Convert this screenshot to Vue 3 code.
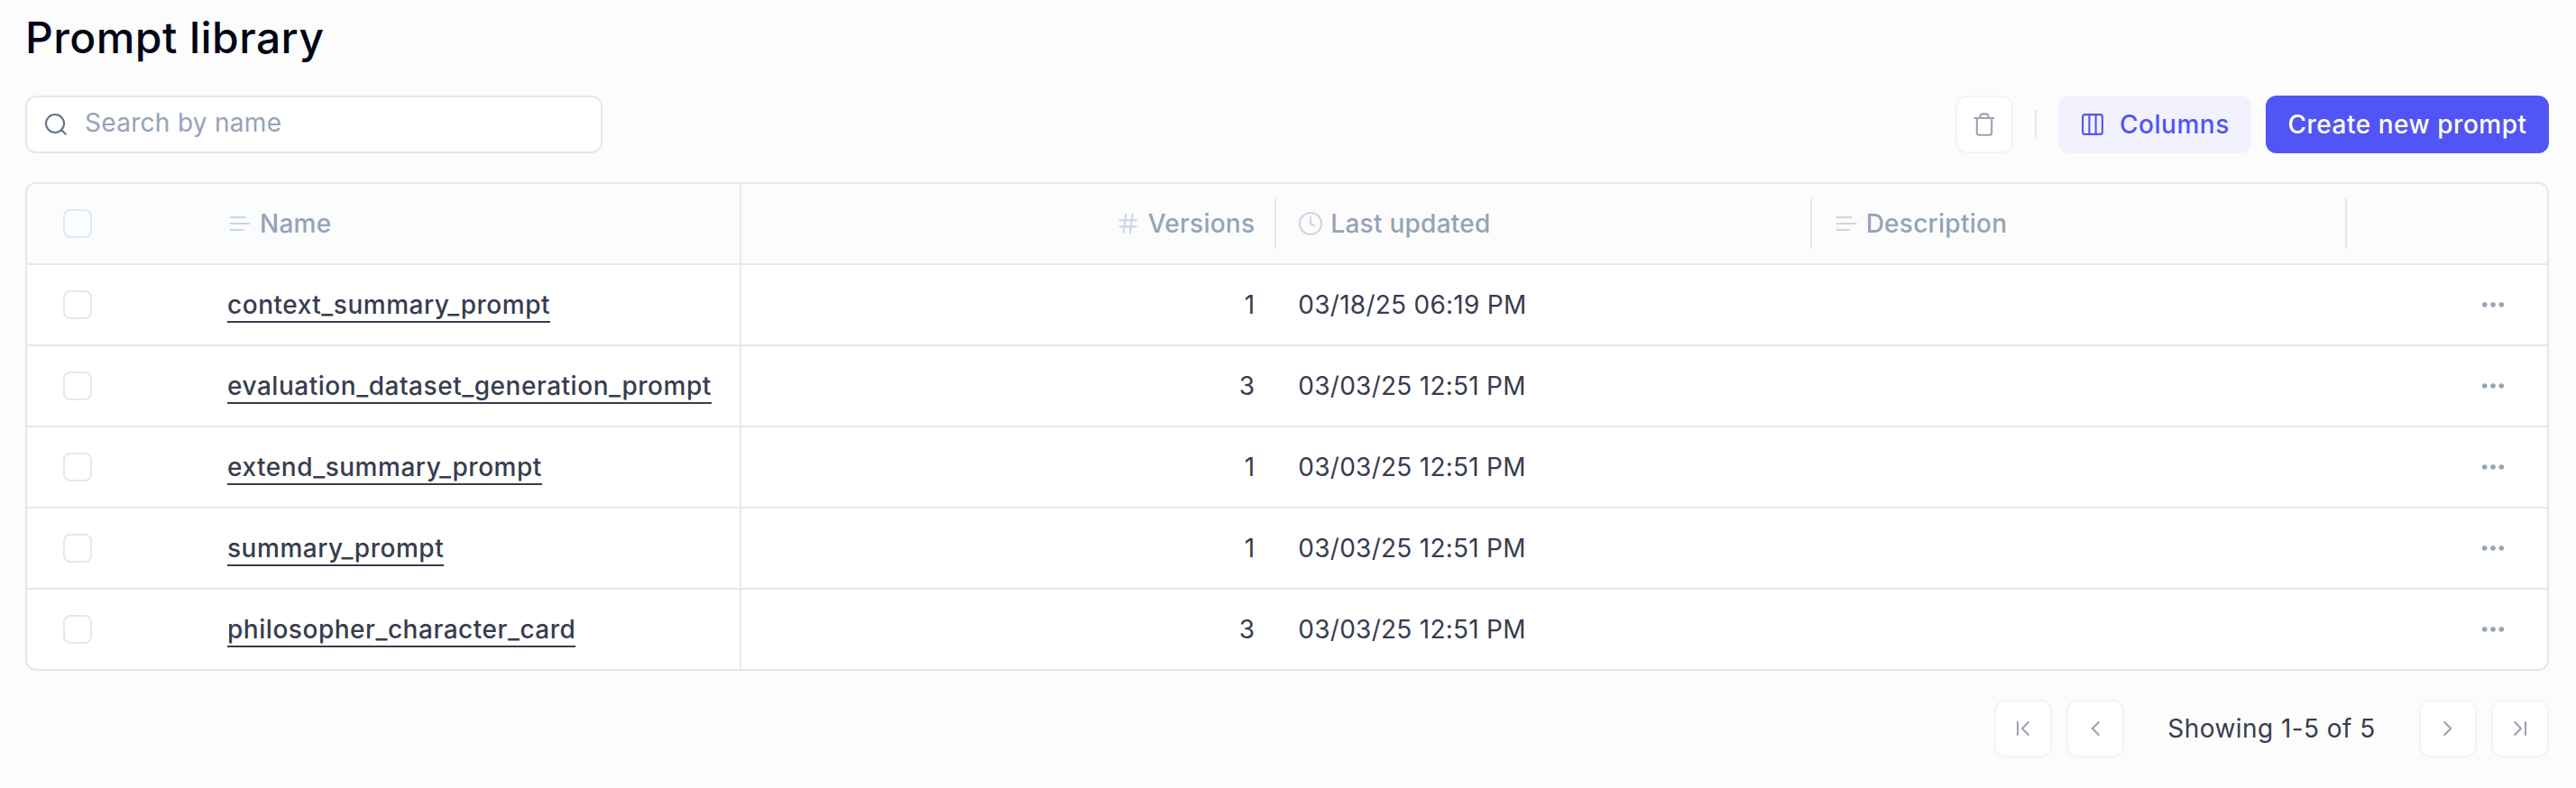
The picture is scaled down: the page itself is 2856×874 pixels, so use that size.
<template>
  <main class="page">
    <h1 class="title">Prompt library</h1>

    <div class="toolbar">
      <label class="search">
        <svg class="icon" viewBox="0 0 28 28">
          <circle cx="13" cy="13" r="10" />
          <path d="M20.2 20.2 24.8 24.8" />
        </svg>
        <input v-model="search" type="text" placeholder="Search by name" />
      </label>

      <div class="actions">
        <button class="btn-icon" aria-label="Delete">
          <svg class="icon" viewBox="0 0 28 28">
            <path d="M3.5 7h21M22.2 7v16.2a2.5 2.5 0 0 1-2.5 2.5H8.3a2.5 2.5 0 0 1-2.5-2.5V7M9.5 7V5a2.5 2.5 0 0 1 2.5-2.6h4A2.5 2.5 0 0 1 18.5 5v2" />
          </svg>
        </button>
        <span class="divider"></span>
        <button class="btn btn-secondary">
          <svg class="icon-columns" viewBox="0 0 24 24">
            <rect x="1.1" y="1.1" width="21.8" height="21.8" rx="2.5" />
            <path d="M8.4 1v22M15.6 1v22" />
          </svg>
          Columns
        </button>
        <button class="btn btn-primary">Create new prompt</button>
      </div>
    </div>

    <div class="table">
      <div class="row head">
        <div class="cell pinned">
          <span class="checkbox"></span>
          <span class="label">
            <svg class="icon" viewBox="0 0 28 28"><path d="M3.7 7h15.6M3.7 14h21M3.7 21h13.6" /></svg>
            Name
          </span>
        </div>
        <div class="cell right sep">
          <span class="label">
            <svg class="icon" viewBox="0 0 28 28"><path d="M4.7 10.4h18M4.7 17.4h18M11.3 3.7 8.6 24.3M18.6 3.7 15.9 24.3" /></svg>
            Versions
          </span>
        </div>
        <div class="cell sep">
          <span class="label">
            <svg class="icon" viewBox="0 0 28 28"><circle cx="14" cy="14" r="12" /><path d="M14 7v7l4.2 2.3" /></svg>
            Last updated
          </span>
        </div>
        <div class="cell sep">
          <span class="label">
            <svg class="icon" viewBox="0 0 28 28"><path d="M3.7 7h15.6M3.7 14h21M3.7 21h13.6" /></svg>
            Description
          </span>
        </div>
        <div class="cell"></div>
      </div>

      <div v-for="prompt in filtered" :key="prompt.name" class="row">
        <div class="cell pinned">
          <span class="checkbox"></span>
          <a class="name">{{ prompt.name }}</a>
        </div>
        <div class="cell right">{{ prompt.versions }}</div>
        <div class="cell">{{ prompt.updated }}</div>
        <div class="cell"></div>
        <div class="cell menu">
          <svg class="icon dots" viewBox="0 0 28 28">
            <circle cx="4.7" cy="14" r="2.8" />
            <circle cx="14" cy="14" r="2.8" />
            <circle cx="23.3" cy="14" r="2.8" />
          </svg>
        </div>
      </div>
    </div>

    <div class="pagination">
      <button class="btn-icon" aria-label="First page">
        <svg class="icon" viewBox="0 0 28 28"><path d="M8 7v14M19.8 7 13 14l6.8 7" /></svg>
      </button>
      <button class="btn-icon" aria-label="Previous page">
        <svg class="icon" viewBox="0 0 28 28"><path d="M17.8 7 10.8 14l7 7" /></svg>
      </button>
      <span class="showing">Showing 1-{{ filtered.length }} of {{ filtered.length }}</span>
      <button class="btn-icon" aria-label="Next page">
        <svg class="icon" viewBox="0 0 28 28"><path d="M10.2 7l7 7-7 7" /></svg>
      </button>
      <button class="btn-icon" aria-label="Last page">
        <svg class="icon" viewBox="0 0 28 28"><path d="M20 7v14M8.2 7l6.8 7-6.8 7" /></svg>
      </button>
    </div>
  </main>
</template>

<script setup>
import { ref, computed } from 'vue'

const search = ref('')

const prompts = [
  { name: 'context_summary_prompt', versions: 1, updated: '03/18/25 06:19 PM' },
  { name: 'evaluation_dataset_generation_prompt', versions: 3, updated: '03/03/25 12:51 PM' },
  { name: 'extend_summary_prompt', versions: 1, updated: '03/03/25 12:51 PM' },
  { name: 'summary_prompt', versions: 1, updated: '03/03/25 12:51 PM' },
  { name: 'philosopher_character_card', versions: 3, updated: '03/03/25 12:51 PM' }
]

const filtered = computed(() => prompts.filter((p) => p.name.includes(search.value)))
</script>

<style>
body {
  background: #fcfcfc;
}
</style>

<style scoped>
* {
  box-sizing: border-box;
}

.page {
  height: 874px;
  padding: 12px 30px 0 28px;
  background: #fcfcfc;
  color: #373d4f;
  font-family: Inter, 'Liberation Sans', sans-serif;
  font-size: 28px;
  line-height: 40px;
  letter-spacing: 0.26px;
}

.title {
  margin: 0;
  color: #020617;
  font-size: 48px;
  font-weight: 550;
  line-height: 60px;
  letter-spacing: 0.44px;
}

svg {
  display: block;
  flex: none;
  fill: none;
  stroke: currentColor;
  stroke-width: 2.1;
  stroke-linecap: round;
  stroke-linejoin: round;
}

.icon {
  width: 28px;
  height: 28px;
}

.icon-columns {
  width: 24px;
  height: 24px;
}

/* ===== TOOLBAR ===== */
.toolbar {
  display: flex;
  justify-content: space-between;
  margin-top: 34px;
}

.search {
  display: flex;
  align-items: center;
  width: 640px;
  height: 64px;
  padding: 0 18px;
  border: 2px solid #e2e8f0;
  border-radius: 12px;
  background: #fff;
}

.search .icon {
  color: #64748b;
}

.search input {
  flex: 1;
  margin-left: 18px;
  padding: 0 0 4px;
  border: none;
  outline: none;
  background: none;
  color: #373d4f;
  font: inherit;
  letter-spacing: 0.3px;
}

.search input::placeholder {
  color: #94a3b8;
}

.actions {
  display: flex;
  align-items: center;
}

.divider {
  width: 2px;
  height: 32px;
  margin: 0 24px;
  background: #e2e8f0;
}

.btn {
  display: flex;
  align-items: center;
  justify-content: center;
  height: 64px;
  border: none;
  border-radius: 12px;
  font: inherit;
  font-weight: 550;
  letter-spacing: 0.52px;
  white-space: nowrap;
}

.btn-secondary {
  justify-content: flex-start;
  gap: 18px;
  width: 214px;
  padding: 0 0 0 26px;
  background: #f2f2ff;
  color: #5155f5;
}

.btn-primary {
  width: 314px;
  margin-left: 16px;
  padding: 0;
  background: #5155f5;
  color: #fff;
}

.btn-icon {
  display: flex;
  align-items: center;
  justify-content: center;
  width: 64px;
  height: 64px;
  padding: 0;
  border: 2px solid #f4f4f5;
  border-radius: 12px;
  background: #fff;
  color: #9ca3b4;
}

/* ===== TABLE ===== */
.table {
  margin-top: 32px;
  border: 2px solid #e2e8f0;
  border-radius: 12px;
  background: #fff;
  overflow: hidden;
}

.row {
  display: grid;
  grid-template-columns: 792px repeat(3, 593.33px) 1fr;
  height: 90px;
  border-bottom: 2px solid #e2e8f0;
}

.row:last-child {
  height: 88px;
  border-bottom: none;
}

.cell {
  display: flex;
  align-items: center;
  padding: 0 24px;
}

.pinned {
  padding-left: 40px;
  border-right: 2px solid #e2e8f0;
}

.right {
  justify-content: flex-end;
}

.checkbox {
  width: 32px;
  height: 32px;
  margin-right: 150px;
  border: 2px solid #e2e8f0;
  border-radius: 8px;
}

.name {
  height: 40px;
  border-bottom: 2px solid #373d4f;
  font-weight: 510;
  letter-spacing: 0.53px;
}

.head {
  background: #fcfcfc;
  color: #94a3b8;
  font-weight: 550;
  letter-spacing: 0.26px;
}

.head .pinned {
  background: #fbfcfe;
}

.head .sep {
  padding-right: 0;
}

.head .sep::after {
  content: '';
  width: 2px;
  height: 56px;
  margin-left: auto;
  background: #e2e8f0;
}

.head .right::after {
  margin-left: 22px;
}

.label {
  display: flex;
  align-items: center;
  gap: 8px;
}

.label svg {
  color: #cbd5e1;
}

.menu {
  justify-content: flex-end;
  padding-right: 46px;
  color: #94a3b8;
}

.dots {
  fill: currentColor;
  stroke: none;
}

/* ===== PAGINATION ===== */
.pagination {
  display: flex;
  align-items: center;
  justify-content: flex-end;
  gap: 16px;
  margin-top: 32px;
}

.showing {
  width: 295px;
  text-align: center;
  letter-spacing: 0.44px;
}
</style>
